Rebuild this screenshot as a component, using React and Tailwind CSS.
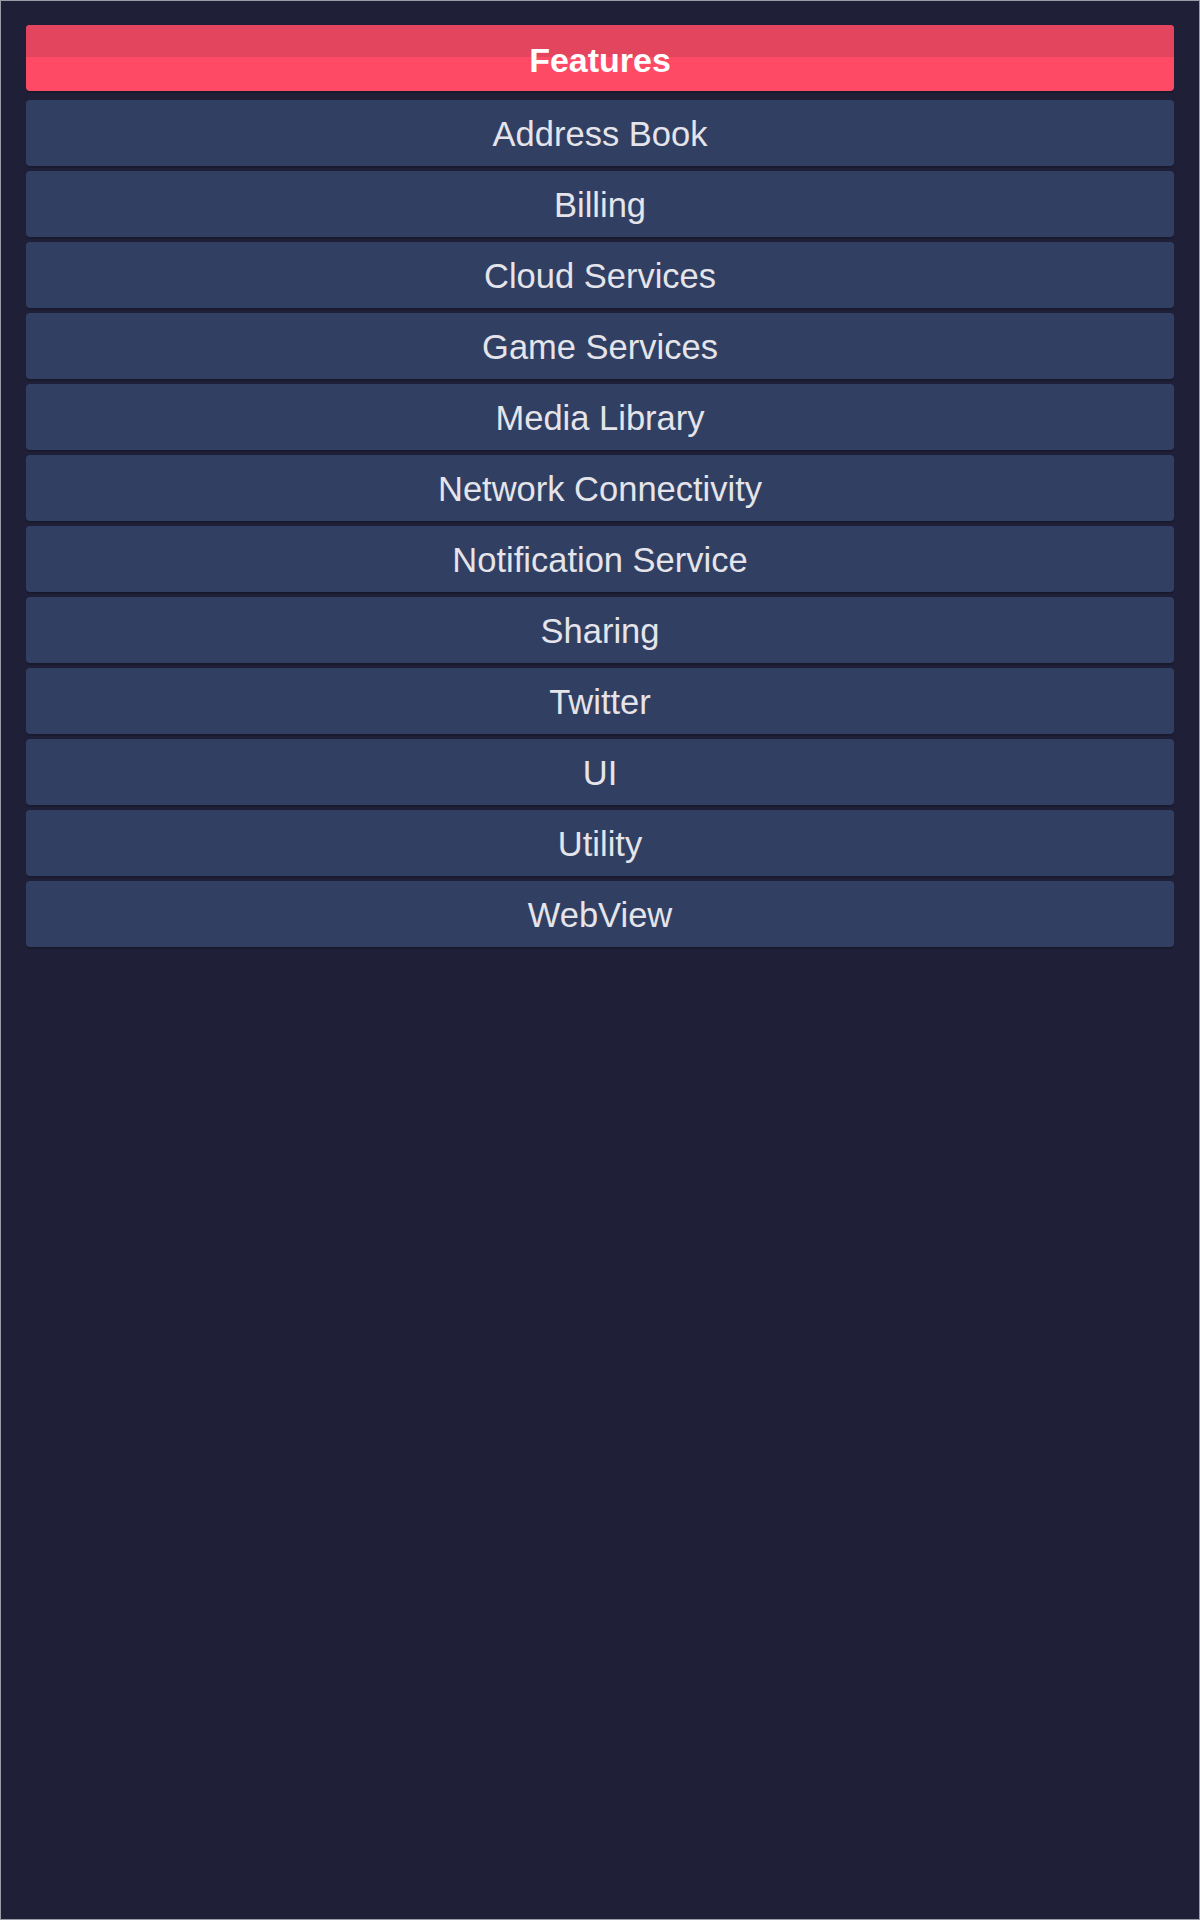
const features = [
  'Address Book',
  'Billing',
  'Cloud Services',
  'Game Services',
  'Media Library',
  'Network Connectivity',
  'Notification Service',
  'Sharing',
  'Twitter',
  'UI',
  'Utility',
  'WebView',
]

export default function App() {
  return (
    <div
      className="w-[1200px] h-[1920px] border border-[#9b9ba3] bg-[#1f1f38] px-[25px] pt-[24px]"
      style={{ fontFamily: '"Liberation Sans", Arial, sans-serif' }}
    >
      <div className="relative h-[66px] rounded-[4px] overflow-hidden bg-[#fe4a64] shadow-[0_2px_0_#1a1a2e] flex items-center justify-center">
        <div className="absolute inset-x-0 top-0 h-[32px] bg-[#e4455e]" />
        <span className="relative pt-[3px] text-white font-bold text-[34px] leading-none">Features</span>
      </div>

      <div className="mt-[9px] flex flex-col gap-[5px]">
        {features.map((name) => (
          <div
            key={name}
            className="h-[66px] rounded-[4px] bg-[#313f63] shadow-[0_2px_0_#1a1a2e] flex items-center justify-center"
          >
            <span className="pt-[3px] text-[#e4e4ea] text-[34.5px] leading-none">{name}</span>
          </div>
        ))}
      </div>
    </div>
  )
}
